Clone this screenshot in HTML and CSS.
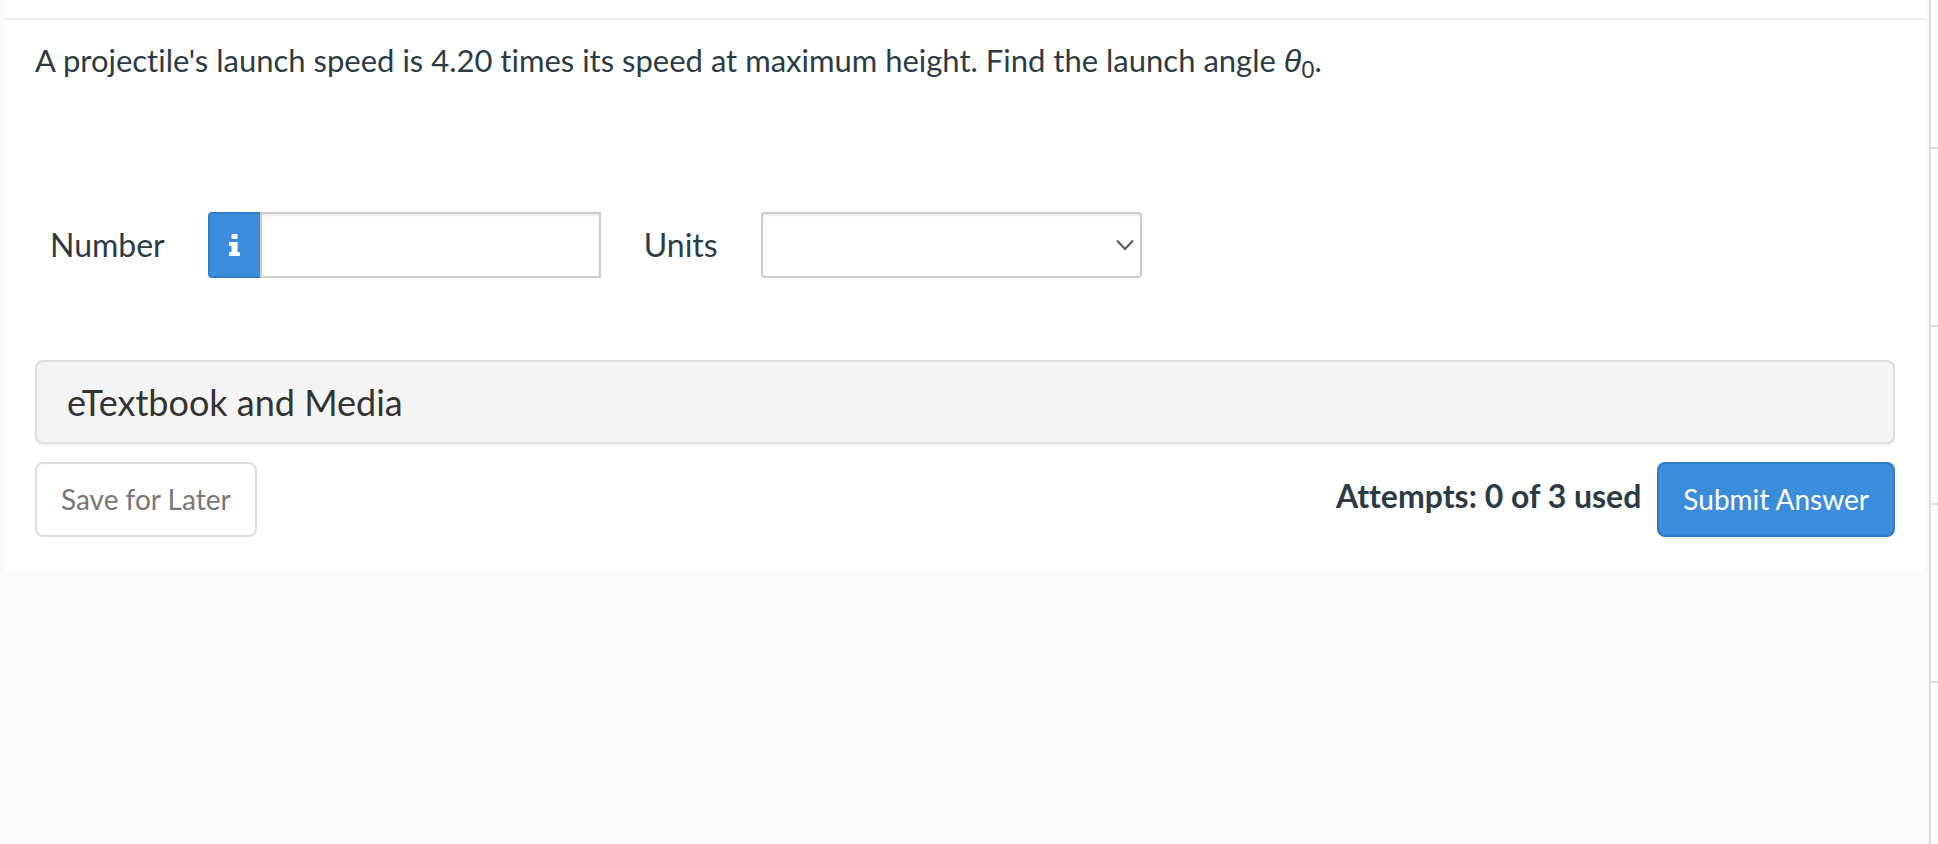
FILE: index.html
```html
<!DOCTYPE html>
<html lang="en">
<head>
    <meta charset="UTF-8">
    <meta name="viewport" content="width=device-width, initial-scale=1.0">
    <title>Assignment</title>
    <link rel="stylesheet" href="styles.css">
</head>
<body>
    <div class="page">
        <main class="main">
            <div class="card">
                <div class="card-header"></div>
                <div class="card-body">
                    <p class="question">A projectile's launch speed is 4.20 times its speed at maximum height. Find the launch angle <i>θ</i><sub>0</sub>.</p>

                    <div class="answer">
                        <label for="number">Number</label>
                        <div class="input-group">
                            <button type="button" class="info" aria-label="Information">
                                <svg width="11" height="23" viewBox="0 0 11 23">
                                    <rect x="2.5" y="0" width="6" height="5" rx="1"/>
                                    <path d="M1 8h7.5v10H10a1 1 0 0 1 1 1v2a1 1 0 0 1-1 1H1a1 1 0 0 1-1-1v-2a1 1 0 0 1 1-1h1.500v-6H1a1 1 0 0 1-1-1V9a1 1 0 0 1 1-1z"/>
                                </svg>
                            </button>
                            <input type="text" id="number">
                        </div>
                        <label for="units">Units</label>
                        <div class="select-wrap">
                            <select id="units">
                                <option></option>
                            </select>
                            <svg class="chevron" width="18" height="12" viewBox="0 0 18 12">
                                <path d="M1 1.500l8 8.500l8-8.500"/>
                            </svg>
                        </div>
                    </div>

                    <button type="button" class="panel">eTextbook and Media</button>

                    <div class="actions">
                        <button type="button" class="btn">Save for Later</button>
                        <span class="attempts">Attempts: 0 of 3 used</span>
                        <button type="button" class="btn btn-primary">Submit Answer</button>
                    </div>
                </div>
            </div>
        </main>
        <aside class="sidebar">
            <div class="sidebar-item"></div>
            <div class="sidebar-item"></div>
            <div class="sidebar-item"></div>
            <div class="sidebar-item"></div>
        </aside>
    </div>
</body>
</html>
```
FILE: styles.css
```css
* { box-sizing: border-box; }
body {
    margin: 0;
    font-family: Lato, "Liberation Sans", sans-serif;
    font-size: 32px;
    line-height: 40px;
    font-variant-ligatures: none;
    color: #2d3b45;
    background-color: #fafafa;
}
button, input, select { font-family: inherit; font-variant-ligatures: inherit; }
button { cursor: pointer; }
.page { display: flex; min-height: 100vh; }
.main { flex: 1; padding: 0 4px 0 5px; }
.card { background-color: #fff; }
.card-header { height: 20px; border-bottom: 2px solid #eee; }
.card-body { padding: 20px 30px 34px; }
.question { margin: 0; font-size: 31px; }
.question i { font-family: "Liberation Sans", sans-serif; font-size: 32px; line-height: 1; }
.question sub {
    font-family: "Liberation Sans", sans-serif;
    font-size: 24px;
    line-height: 1;
    vertical-align: -6px;
}
.answer {
    display: flex;
    align-items: center;
    gap: 43px;
    margin: 130px 0 82px;
    padding-left: 15px;
}
.input-group { display: flex; width: 393px; height: 66px; }
.info {
    display: flex;
    align-items: center;
    justify-content: center;
    width: 52px;
    padding: 0;
    background-color: #3c8cdc;
    border: 2px solid #327dc8;
    border-right: none;
    border-radius: 4px 0 0 4px;
}
.info svg { fill: #fff; }
.input-group input {
    flex: 1;
    min-width: 0;
    padding: 0 12px;
    font-size: 28px;
    border: 2px solid #ccc;
    border-radius: 0;
    box-shadow: inset 0 2px 2px rgba(0, 0, 0, 0.08);
}
.select-wrap { position: relative; width: 381px; height: 66px; }
.select-wrap select {
    width: 100%;
    height: 100%;
    padding: 0 32px 0 12px;
    font-size: 28px;
    background-color: #fff;
    border: 2px solid #ccc;
    border-radius: 4px;
    box-shadow: inset 0 2px 2px rgba(0, 0, 0, 0.08);
    appearance: none;
}
.chevron {
    position: absolute;
    top: 27px;
    right: 8px;
    fill: none;
    stroke: #555;
    stroke-width: 2;
    pointer-events: none;
}
.panel {
    display: block;
    width: 100%;
    padding: 20px 30px;
    font-size: 36px;
    line-height: 40px;
    text-align: left;
    color: #333;
    background-color: #f4f4f4;
    border: 2px solid #ddd;
    border-radius: 8px;
    box-shadow: 0 2px 2px rgba(0, 0, 0, 0.05);
}
.actions { display: flex; gap: 16px; margin-top: 18px; }
.btn {
    padding: 15px 24px 16px;
    font-size: 28px;
    line-height: 40px;
    color: #777;
    background-color: #fff;
    border: 2px solid #ddd;
    border-radius: 8px;
}
.btn-primary {
    color: #fff;
    background-color: #3c8cdc;
    border-color: #327dc8;
}
.attempts { margin-left: auto; padding-top: 14px; font-weight: bold; }
.sidebar { width: 9px; background-color: #fff; border-left: 2px solid #ddd; }
.sidebar-item { height: 178px; border-bottom: 2px solid #ddd; }
.sidebar-item:first-child { height: 149px; }
```
